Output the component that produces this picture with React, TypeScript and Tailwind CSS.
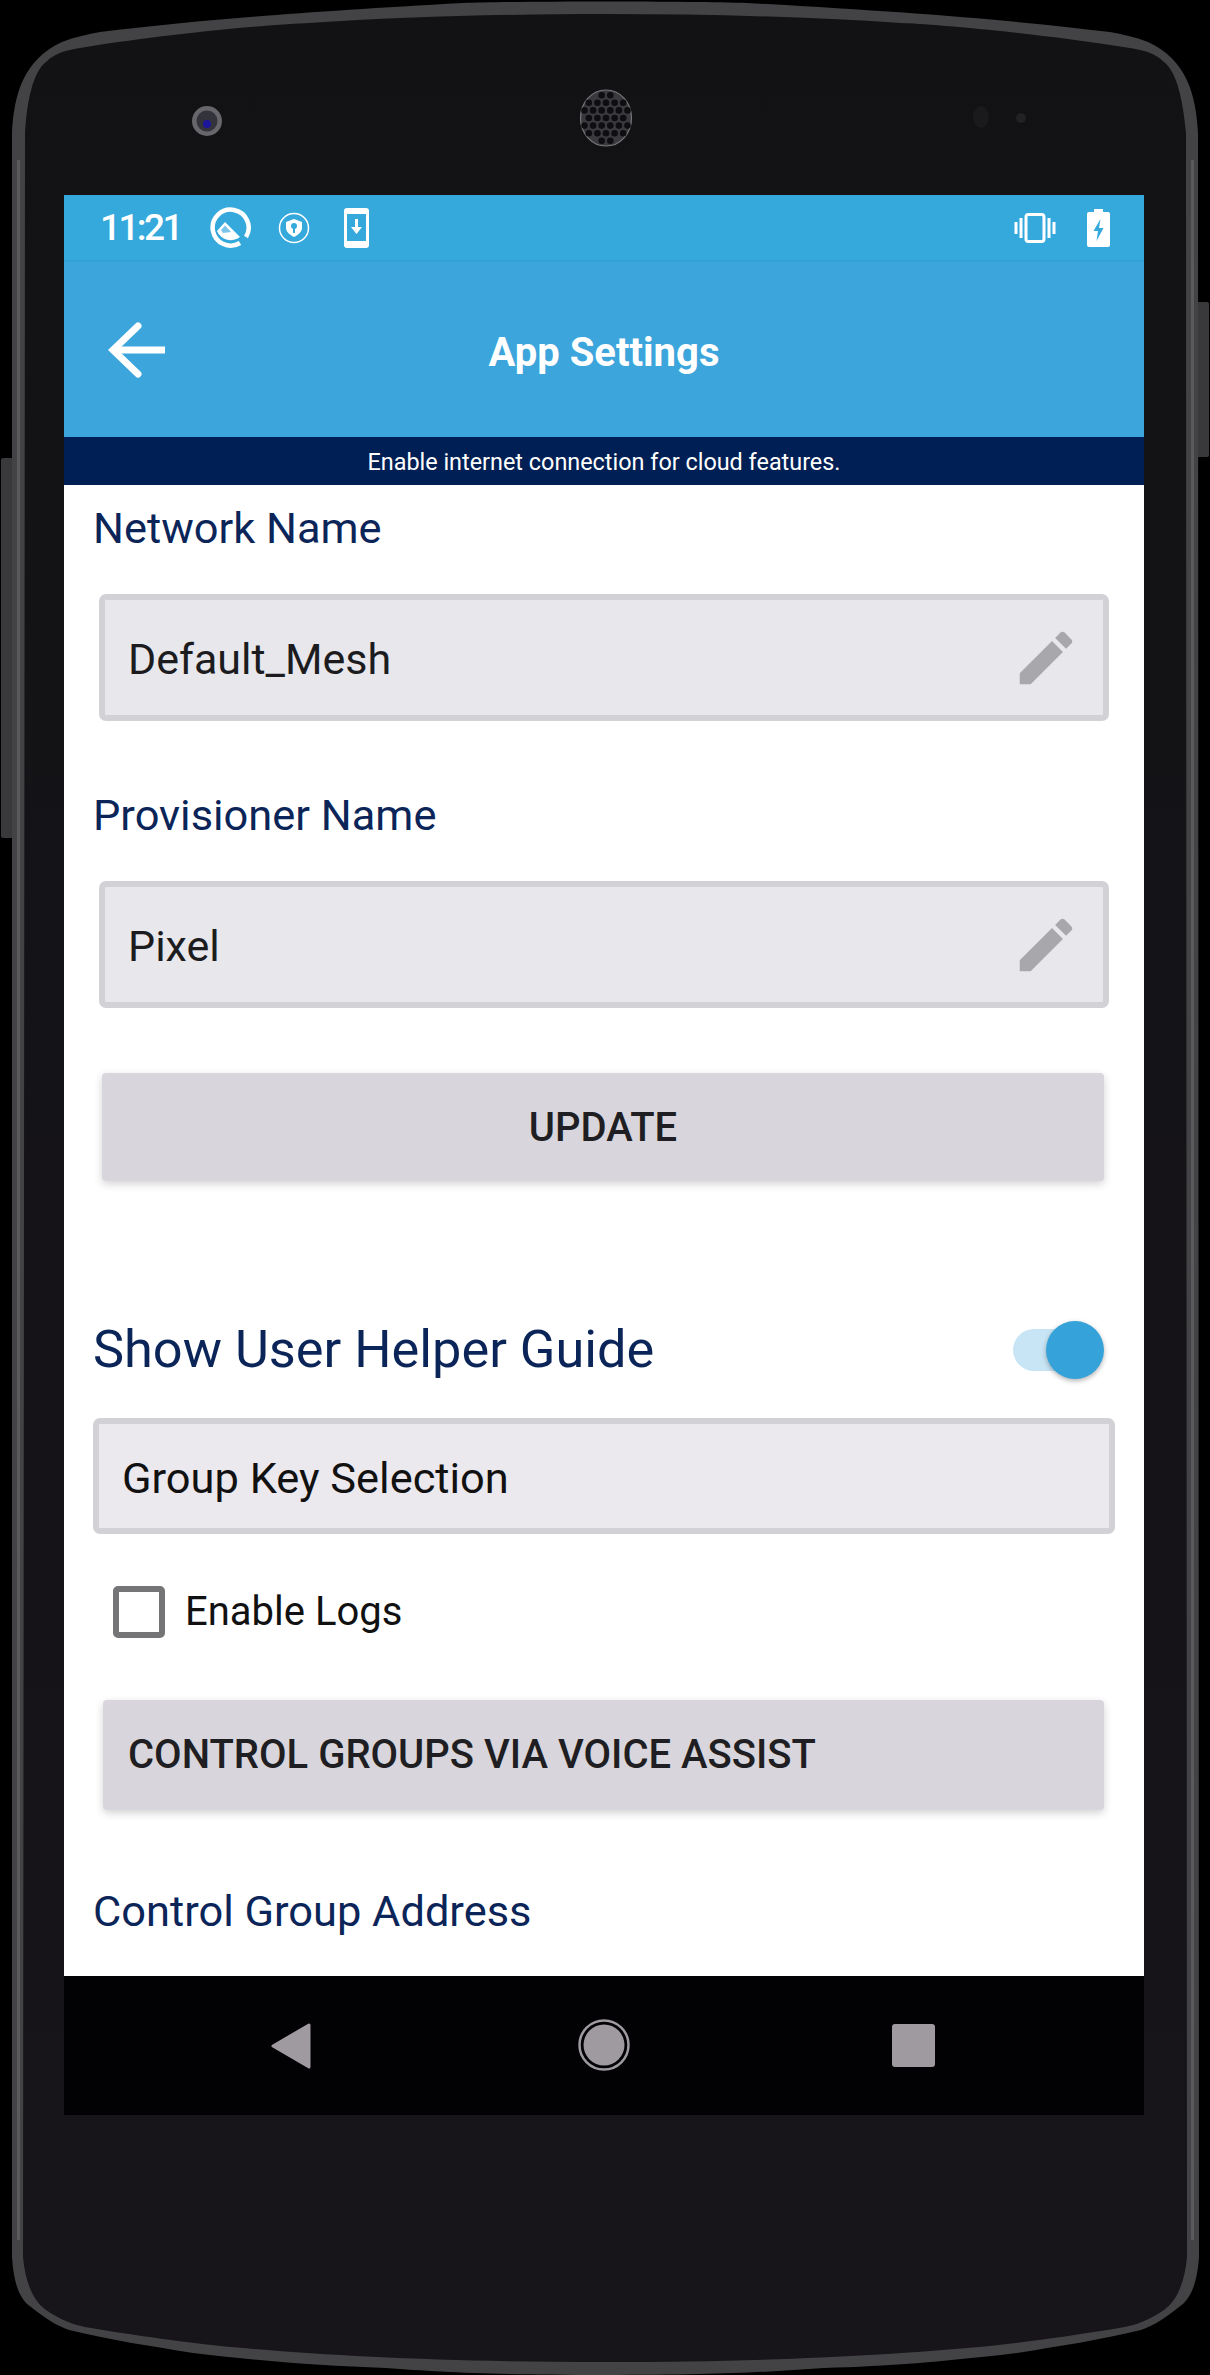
const LABEL = "text-[#0b2559] text-[43.4px] leading-[48px]";

function DeviceFrame() {
  const outer =
    "M12 133 C14 95 23 60 62 42 C75 37 88 34 100 32 C200 20 300 12 463 3 C520 1 690 1 747 3 C910 12 1010 20 1110 32 C1122 34 1135 37 1148 42 C1187 60 1196 95 1198 133 L1199 2257 C1197 2285 1190 2300 1179 2307 C1165 2318 1155 2325 1141 2330 C1100 2340 1060 2346 1017 2353 C940 2362 890 2366 824 2368 C770 2372 720 2375 605 2375 C490 2375 440 2372 386 2368 C320 2366 270 2362 193 2353 C150 2346 110 2340 69 2330 C55 2325 45 2318 31 2307 C20 2300 14 2285 12 2257 Z";
  const inner =
    "M25 133 C27 100 33 72 46 62 C56 52 68 50 80 48 C180 32 280 24 309 23 C400 17 500 14 605 14 C710 14 810 17 901 23 C930 24 1030 32 1130 48 C1142 50 1154 52 1164 62 C1177 72 1183 100 1186 133 L1187 2257 C1185 2280 1178 2300 1164 2310 C1150 2320 1135 2325 1125 2327 C1060 2338 1010 2344 979 2347 C880 2356 760 2362 605 2362 C450 2362 330 2356 231 2347 C200 2344 150 2338 85 2327 C75 2325 60 2320 46 2310 C32 2300 25 2280 23 2257 Z";
  const holes: [number, number][] = [];
  for (let row = -3; row <= 3; row++) {
    for (let col = -3; col <= 3; col++) {
      const x = col * 8.6 + (row % 2 ? 4.3 : 0);
      const y = row * 7.6;
      if (x * x + y * y < 560) holes.push([606 + x, 118 + y]);
    }
  }
  return (
    <svg className="absolute inset-0" width="1210" height="2375" viewBox="0 0 1210 2375">
      <defs>
        <linearGradient id="body" x1="0" y1="0" x2="0" y2="1">
          <stop offset="0" stopColor="#121214" />
          <stop offset="1" stopColor="#17141a" />
        </linearGradient>
      </defs>
      <rect x="1" y="458" width="14" height="380" rx="2" fill="#39383a" />
      <rect x="1195" y="302" width="14" height="155" rx="2" fill="#39383a" />
      <path d={outer} fill="#434245" />
      <rect x="17" y="160" width="3" height="2080" fill="#5a595c" />
      <rect x="1191" y="160" width="3" height="2080" fill="#5a595c" />
      <path d={inner} fill="url(#body)" />
      {/* camera */}
      <circle cx="207" cy="121" r="15" fill="#66666b" />
      <circle cx="207" cy="121" r="10.5" fill="#33333c" />
      <circle cx="207" cy="124" r="4" fill="#1c169c" />
      {/* earpiece */}
      <ellipse cx="606" cy="118" rx="25.5" ry="28" fill="#3a393d" stroke="#77767a" strokeWidth="1.2" />
      {holes.map(([x, y]) => (
        <circle key={`${x}_${y}`} cx={x} cy={y} r="3.3" fill="#0e0e10" />
      ))}
      {/* sensors */}
      <ellipse cx="981" cy="117" rx="8" ry="11" fill="#1a1a1d" />
      <circle cx="1021" cy="118" r="5" fill="#222225" />
    </svg>
  );
}

function StatusBar() {
  return (
    <div className="h-[67px] bg-[#35a9dc] border-b-2 border-[#33a1d3] flex items-center justify-between pl-[36px] pr-[34px]">
      <div className="flex items-center">
        <span className="text-white text-[37px] font-medium tracking-[-2.6px] w-[89px]">11:21</span>
        <svg width="42" height="42" viewBox="0 0 42 42" fill="none" className="ml-[20px]">
          <path d="M31 36 A18 18 0 1 1 37 30" stroke="white" strokeWidth="4.5" />
          <path d="M8 24 L16 15 L31 30 A15 15 0 0 1 8 24 Z" fill="white" />
          <path d="M12 23 L16 18.5 L22 25 L14 26 Z" fill="#7cc4ea" />
        </svg>
        <svg width="32" height="32" viewBox="0 0 32 32" className="ml-[27px]">
          <circle cx="16" cy="16" r="14.5" fill="none" stroke="white" strokeWidth="1.5" />
          <path d="M16 7 L24 10 V16 C24 20 20 23 16 25 C12 23 8 20 8 16 V10 Z" fill="white" />
          <circle cx="16" cy="14" r="3" fill="#35a9dc" />
          <rect x="15" y="15" width="2" height="6" fill="#35a9dc" />
        </svg>
        <svg width="25" height="40" viewBox="0 0 25 40" className="ml-[34px]">
          <rect x="0" y="0" width="25" height="40" rx="3" fill="white" />
          <rect x="3" y="6" width="19" height="27" fill="#35a9dc" />
          <path d="M11 11 H14 V19 H18 L12.5 26 L7 19 H11 Z" fill="white" />
        </svg>
      </div>
      <div className="flex items-center">
        <svg width="42" height="30" viewBox="0 0 42 30">
          <rect x="0.5" y="9" width="3" height="12" fill="white" />
          <rect x="5.5" y="5" width="3" height="20" fill="white" />
          <rect x="12" y="1.5" width="18" height="27" rx="2.5" fill="none" stroke="white" strokeWidth="3" />
          <rect x="33.5" y="5" width="3" height="20" fill="white" />
          <rect x="38.5" y="9" width="3" height="12" fill="white" />
        </svg>
        <svg width="23" height="38" viewBox="0 0 23 38" className="ml-[31px]">
          <path d="M7 0 H16 V3 H21 Q23 3 23 5 V36 Q23 38 21 38 H2 Q0 38 0 36 V5 Q0 3 2 3 H7 Z" fill="white" />
          <path d="M13.5 10 L6.5 22 H11 L9.5 32 L16.5 19 H12 Z" fill="#35a9dc" />
        </svg>
      </div>
    </div>
  );
}

function EditField({ value, className }: { value: string; className?: string }) {
  return (
    <div
      className={`ml-[35px] w-[1010px] h-[127px] rounded-[7px] border-[6px] border-[#d2d1d6] bg-[#e8e7ec] flex items-center justify-between pl-[23px] pr-[22px] ${className ?? ""}`}
    >
      <span className="text-[#1c1c1f] text-[43px] pt-[3px]">{value}</span>
      <svg width="70" height="70" viewBox="0 0 24 24" fill="#a8a7ab">
        <path d="M3 17.25V21h3.75L17.81 9.94l-3.75-3.75L3 17.25zM20.71 7.04c.39-.39.39-1.02 0-1.41l-2.34-2.34c-.39-.39-1.02-.39-1.41 0l-1.83 1.83 3.75 3.75 1.83-1.83z" />
      </svg>
    </div>
  );
}

export default function App() {
  return (
    <div
      className="relative w-[1210px] h-[2375px] bg-black overflow-hidden pt-[195px] pl-[64px]"
      style={{ fontFamily: "Roboto, sans-serif" }}
    >
      <DeviceFrame />
      <div className="relative w-[1080px]">
        <StatusBar />

        {/* toolbar */}
        <div className="h-[175px] bg-[#3ca5dc] grid grid-cols-[1fr_auto_1fr] items-center pl-[44px]">
          <svg width="58" height="56" viewBox="0 0 58 56" fill="none" stroke="white" strokeWidth="7" strokeLinecap="round">
            <path d="M4 28 H57" strokeLinecap="butt" />
            <path d="M30 4 L5 28 L30 52" />
          </svg>
          <span className="text-white text-[40px] font-bold -ml-[44px] pt-[6px]">App Settings</span>
          <span />
        </div>
        <div className="h-[48px] bg-[#001f54] flex items-center justify-center text-white text-[23.4px] pt-[3px]">
          Enable internet connection for cloud features.
        </div>

        {/* content */}
        <div className="h-[1491px] bg-white overflow-hidden flex flex-col">
          <div className={`${LABEL} ml-[29px] mt-[20px]`}>Network Name</div>
          <EditField value="Default_Mesh" className="mt-[41px]" />
          <div className={`${LABEL} ml-[29px] mt-[71px]`}>Provisioner Name</div>
          <EditField value="Pixel" className="mt-[41px]" />
          <div className="ml-[38px] mt-[65px] w-[1002px] h-[108px] rounded-[4px] bg-[#d8d6dc] shadow-[0_3px_8px_rgba(0,0,0,0.18)] flex items-center justify-center text-[#1f1e22] text-[40px] font-medium pt-[2px]">
            UPDATE
          </div>

          <div className="ml-[29px] mt-[139px] mr-[40px] h-[60px] flex items-center justify-between">
            <span className="text-[#0b2559] text-[52.3px] pb-[2px]">Show User Helper Guide</span>
            <div className="relative w-[91px] h-[58px] flex items-center">
              <div className="w-[72px] h-[42px] rounded-full bg-[#c8e5f5]" />
              <div className="absolute right-0 top-0 w-[58px] h-[58px] rounded-full bg-[#35a3da] shadow-[0_2px_5px_rgba(0,0,0,0.3)]" />
            </div>
          </div>

          <div className="ml-[29px] mt-[38px] w-[1022px] h-[116px] rounded-[7px] border-[6px] border-[#d2d1d6] bg-[#ebe8ee] flex items-center pl-[23px] text-[#111] text-[43.4px]">
            <span className="pt-[5px]">Group Key Selection</span>
          </div>

          <div className="ml-[49px] mt-[48px] flex items-center">
            <div className="w-[52px] h-[52px] rounded-[5px] border-[6px] border-[#757578] bg-white" />
            <span className="ml-[20px] text-[#111] text-[40px]">Enable Logs</span>
          </div>

          <div className="ml-[39px] mt-[58px] w-[1001px] h-[110px] rounded-[4px] bg-[#d8d6dc] shadow-[0_3px_8px_rgba(0,0,0,0.18)] flex items-center pl-[25px] text-[#1f1e22] text-[40px] font-medium">
            CONTROL GROUPS VIA VOICE ASSIST
          </div>

          <div className={`${LABEL} ml-[29px] mt-[78px]`}>Control Group Address</div>
        </div>

        {/* nav bar */}
        <div className="h-[139px] bg-[#020104] relative">
          <div className="absolute left-[206px] top-[46px]">
            <svg width="42" height="48" viewBox="0 0 42 48" fill="#9e9a9f" stroke="#9e9a9f" strokeWidth="3" strokeLinejoin="round">
              <path d="M39 3 V45 L3 24 Z" />
            </svg>
          </div>
          <div className="absolute left-[514px] top-[43px]">
            <svg width="52" height="52" viewBox="0 0 52 52">
              <circle cx="26" cy="26" r="24.5" fill="none" stroke="#9e9a9f" strokeWidth="2.5" />
              <circle cx="26" cy="26" r="20.5" fill="#9e9a9f" />
            </svg>
          </div>
          <div className="absolute left-[828px] top-[48px] w-[43px] h-[43px] rounded-[3px] bg-[#9e9a9f]" />
        </div>
      </div>
    </div>
  );
}
